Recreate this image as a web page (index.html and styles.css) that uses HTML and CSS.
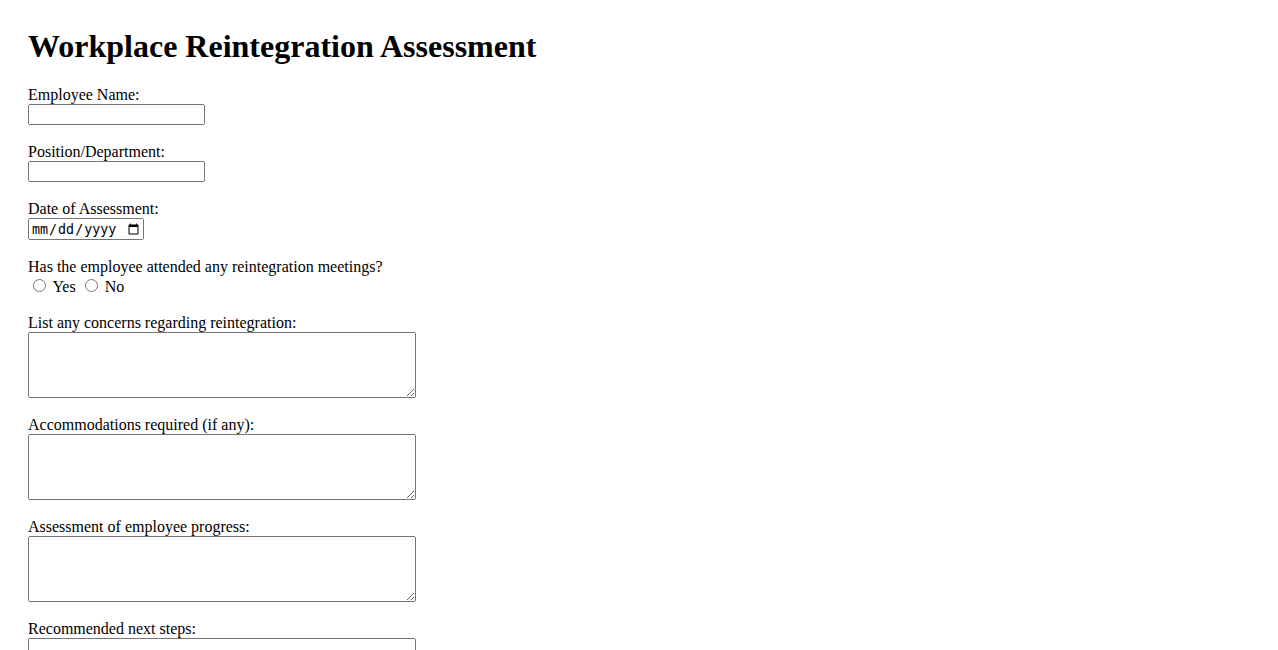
FILE: index.html
```html
<!DOCTYPE html>
<html lang="en">
  <head>
    <meta charset="UTF-8" />
    <meta name="viewport" content="width=device-width, initial-scale=1.0" />
    <title>Workplace Reintegration Assessment</title>

    <link rel="stylesheet" href="styles.css">
  </head>
  <body>
    <main class="assessment">
      <h1 class="assessment__title">Workplace Reintegration Assessment</h1>

      <form action="#" class="assessment__form">
        <div class="field">
          <label for="employee-name">Employee Name:</label>
          <input type="text" id="employee-name" name="employee-name" class="field__text" />
        </div>

        <div class="field">
          <label for="position">Position/Department:</label>
          <input type="text" id="position" name="position" class="field__text" />
        </div>

        <div class="field">
          <label for="assessment-date">Date of Assessment:</label>
          <input type="date" id="assessment-date" name="assessment-date" class="field__date" />
        </div>

        <div class="field">
          <label>Has the employee attended any reintegration meetings?</label>
          <div class="field__choices">
            <input type="radio" id="meetings-yes" name="meetings" value="yes" />
            <label for="meetings-yes">Yes</label>
            <input type="radio" id="meetings-no" name="meetings" value="no" />
            <label for="meetings-no">No</label>
          </div>
        </div>

        <div class="field">
          <label for="concerns">List any concerns regarding reintegration:</label>
          <textarea id="concerns" name="concerns" class="field__area"></textarea>
        </div>

        <div class="field">
          <label for="accommodations">Accommodations required (if any):</label>
          <textarea id="accommodations" name="accommodations" class="field__area"></textarea>
        </div>

        <div class="field">
          <label for="progress">Assessment of employee progress:</label>
          <textarea id="progress" name="progress" class="field__area"></textarea>
        </div>

        <div class="field">
          <label for="next-steps">Recommended next steps:</label>
          <textarea id="next-steps" name="next-steps" class="field__area"></textarea>
        </div>
      </form>
    </main>
  </body>
</html>
```

FILE: styles.css
```css
html,
body {
  font-family: "Liberation Serif", "Times New Roman", serif;
  font-size: 16px;
  color: #000;
}

.assessment {
  padding: 20px;
}

.assessment__title {
  margin: 0 0 21.44px;
  font-size: 32px;
}

.field {
  margin-bottom: 18px;
}

.field > label {
  display: block;
}

.field__text {
  display: block;
  box-sizing: border-box;
  width: 177px;
  height: 21px;
}

.field__date {
  display: block;
  box-sizing: border-box;
  width: 116px;
  height: 22px;
}

.field__area {
  display: block;
  box-sizing: border-box;
  width: 388px;
  height: 66px;
}
```
